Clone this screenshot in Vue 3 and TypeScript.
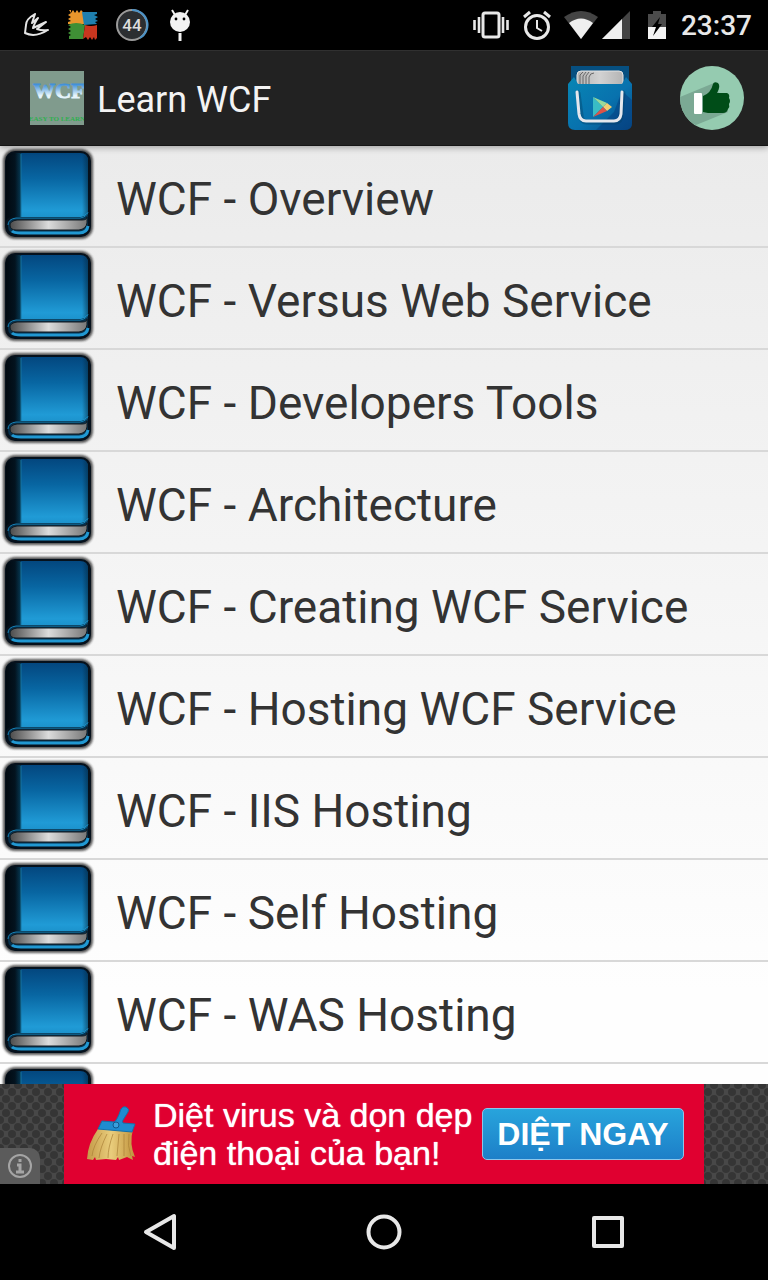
<script setup lang="ts">
interface Topic {
  id: number
  title: string
}

const topics: Topic[] = [
  'WCF - Overview',
  'WCF - Versus Web Service',
  'WCF - Developers Tools',
  'WCF - Architecture',
  'WCF - Creating WCF Service',
  'WCF - Hosting WCF Service',
  'WCF - IIS Hosting',
  'WCF - Self Hosting',
  'WCF - WAS Hosting',
  '',
].map((title, id) => ({ id, title }))
</script>

<template>
  <div class="screen">
    <svg class="defs" width="0" height="0" aria-hidden="true">
      <defs>
        <linearGradient id="cover" x1="0" y1="0" x2="0" y2="1">
          <stop offset="0" stop-color="#03477f" />
          <stop offset="0.4" stop-color="#0866a2" />
          <stop offset="0.9" stop-color="#209bd6" />
          <stop offset="1" stop-color="#1c93cd" />
        </linearGradient>
        <linearGradient id="spine" x1="0" y1="0" x2="1" y2="0">
          <stop offset="0" stop-color="#010910" />
          <stop offset="0.6" stop-color="#03131f" />
          <stop offset="1" stop-color="#063a55" />
        </linearGradient>
        <linearGradient id="edge" x1="0" y1="0" x2="1" y2="0">
          <stop offset="0" stop-color="#04283f" stop-opacity="0" />
          <stop offset="1" stop-color="#04283f" stop-opacity="0.55" />
        </linearGradient>
        <linearGradient id="pages" x1="0" y1="0" x2="1" y2="0">
          <stop offset="0" stop-color="#4c4c4c" />
          <stop offset="0.5" stop-color="#dcdcdc" />
          <stop offset="1" stop-color="#777" />
        </linearGradient>
        <filter id="soft" x="-10%" y="-10%" width="120%" height="120%">
          <feGaussianBlur stdDeviation="1.3" />
        </filter>
        <symbol id="book" viewBox="0 0 96 96">
          <rect x="3" y="3" width="90" height="90" rx="12" fill="#222" opacity="0.75" filter="url(#soft)" />
          <rect x="5" y="5" width="86" height="86" rx="10" fill="#06111c" />
          <path d="M21 7H80Q88 7 88 15V64Q88 70 81 71H21Z" fill="url(#cover)" />
          <path d="M82 8Q88 8 88 15V64Q88 68 82 70Z" fill="url(#edge)" />
          <path d="M6 15Q6 7 14 7H21V71H12Q8 71 6 75Z" fill="url(#spine)" />
          <path d="M21 8V71" stroke="#17759f" stroke-width="1" />
          <path d="M88 66Q87 71 80 72H16Q8 73 8 80Q8 88 17 88H80Q88 88 88 80V70" fill="#07314d" />
          <path d="M88 66Q87 71 80 72H16Q8 73 8 79" fill="none" stroke="#1583b8" stroke-width="1" />
          <path d="M17 74H82Q87 74 87 71V77Q86 83 79 84H16Q10 84 10 79Q10 75 17 74Z" fill="url(#pages)" stroke="#101b22" stroke-width="1" />
          <path d="M12 85Q14 87 21 87H79Q87 87 88 80" fill="none" stroke="#2198d2" stroke-width="3" />
        </symbol>
      </defs>
    </svg>

    <header class="status" aria-label="Status bar">
      <div class="status-group left">
        <svg width="28" height="26" viewBox="0 0 28 26">
          <path d="M12 2Q3 7 3 13L2 21Q12 26 25 18Q19 19 14 17L23 10L10 16Q11 12 15 6L9 11Z" fill="none" stroke="#e4e4e4" stroke-width="2" stroke-linejoin="round" />
        </svg>
        <svg width="32" height="32" viewBox="0 0 32 32">
          <path d="M2 1H4V4L6 1L8 4L10 1L12 4L14 1L17 4L18 15L1 15V13L4 12L1 10L4 8L1 6L4 4Z" fill="#e8962c" />
          <path d="M15 3H30V5L27 6L31 8L28 10L31 12L28 13L30 15L17 16Z" fill="#1f7fae" />
          <path d="M1 16Q9 12 18 16L16 30H2V27L4 26L1 24L4 22L1 20L4 18Z" fill="#3f8f35" />
          <path d="M18 16Q24 18 30 16V29L28 31L27 28L25 31L23 28L21 31L19 28L16 30Z" fill="#c8361f" />
        </svg>
        <svg width="34" height="34" viewBox="0 0 34 34">
          <circle cx="17" cy="17" r="15" fill="#2b2e31" stroke="#9b9b9b" stroke-width="2" />
          <path d="M17 2A15 15 0 0 1 25 30" fill="none" stroke="#4c92c6" stroke-width="2" />
          <text x="17" y="23" text-anchor="middle" class="count">44</text>
        </svg>
        <svg class="android" width="22" height="34" viewBox="0 0 22 34">
          <circle cx="11" cy="14" r="10" fill="#f2f2f2" />
          <path d="M6 7L3 2M16 7L19 2" stroke="#f2f2f2" stroke-width="2" />
          <path d="M11 25V33" stroke="#f2f2f2" stroke-width="3" />
          <circle cx="7" cy="11" r="1.4" fill="#000" />
          <circle cx="15" cy="11" r="1.4" fill="#000" />
        </svg>
      </div>
      <div class="status-group right">
        <svg width="36" height="28" viewBox="0 0 36 28">
          <rect x="10" y="2" width="16" height="24" rx="2" fill="none" stroke="#e8e8e8" stroke-width="3" />
          <path d="M1.5 9V19M6 6V22M30 6V22M34.5 9V19" stroke="#e8e8e8" stroke-width="2.6" />
        </svg>
        <svg class="alarm" width="28" height="30" viewBox="0 0 28 30">
          <circle cx="14" cy="17" r="11.5" fill="none" stroke="#e8e8e8" stroke-width="3" />
          <path d="M14 10V18L19 21" fill="none" stroke="#e8e8e8" stroke-width="2" />
          <path d="M1 7L7 2M27 7L21 2" stroke="#e8e8e8" stroke-width="3" />
        </svg>
        <svg width="36" height="30" viewBox="0 0 36 30">
          <path d="M1 7Q18 -5 35 7L18 29Z" fill="#444" />
          <path d="M6 13Q18 4 30 13L18 29Z" fill="#efefef" />
        </svg>
        <svg class="signal" width="30" height="30" viewBox="0 0 30 30">
          <path d="M1 29L29 1V29Z" fill="#444" />
          <path d="M1 29L21 9V29Z" fill="#efefef" />
        </svg>
        <svg class="battery" width="20" height="30" viewBox="0 0 20 30">
          <path d="M1 4H6V1H14V4H19V17H1Z" fill="#4b4b4b" />
          <path d="M1 17H19V29H1Z" fill="#f4f4f4" />
          <path d="M13 7L5 17H9L6 26L15 14H11Z" fill="#000" />
        </svg>
        <time class="clock">23:37</time>
      </div>
    </header>

    <nav class="app-bar">
      <svg width="54" height="54" viewBox="0 0 54 54" role="img" aria-label="WCF">
        <defs>
          <linearGradient id="word" x1="0" y1="0" x2="0" y2="1">
            <stop offset="0.25" stop-color="#3f8fd8" />
            <stop offset="0.7" stop-color="#e6f5fb" />
          </linearGradient>
        </defs>
        <rect width="54" height="54" fill="#809b8d" />
        <text x="29" y="27" text-anchor="middle" class="logo-word">WCF</text>
        <text x="27" y="50" text-anchor="middle" class="logo-tag">EASY TO LEARN</text>
      </svg>
      <h1>Learn WCF</h1>
      <button class="action" aria-label="More apps">
        <svg width="64" height="64" viewBox="0 0 64 64">
          <defs>
            <linearGradient id="bag" x1="0" y1="0" x2="1" y2="1">
              <stop offset="0" stop-color="#0786b4" />
              <stop offset="0.55" stop-color="#0872ae" />
              <stop offset="1" stop-color="#064985" />
            </linearGradient>
            <linearGradient id="cards" x1="0" y1="0" x2="1" y2="0">
              <stop offset="0" stop-color="#b4b4b4" />
              <stop offset="0.5" stop-color="#d2d2d2" />
              <stop offset="1" stop-color="#b4b4b4" />
            </linearGradient>
          </defs>
          <path d="M3 0H61V18H3Z" fill="#064f80" />
          <rect x="9" y="5" width="46" height="20" rx="4" fill="url(#cards)" stroke="#e4e4e4" />
          <path d="M12 18V9L15 6M15 18V10L18 6M18 18V10L21 6M21 18V11Q22 7 26 7" fill="none" stroke="#686868" />
          <path d="M0 18L6 11L10 18H54L58 11L64 18V57Q64 64 57 64H7Q0 64 0 57Z" fill="url(#bag)" />
          <path d="M28 64L46 46L54 25L64 34V57Q64 64 57 64Z" fill="#063f82" opacity="0.55" />
          <path d="M10 27L13 49Q13 56 19 56H47Q53 56 53 49L55 27" fill="none" stroke="#063e65" stroke-width="5" stroke-linecap="round" opacity="0.4" />
          <path d="M9 26L11 48Q12 55 18 55H46Q52 55 53 48L54 26" fill="none" stroke="#e5e7ed" stroke-width="3" stroke-linecap="round" />
          <path d="M25 31V51L35 41Z" fill="#39bcc5" />
          <path d="M25 31L39 37L35 41Z" fill="#98d99b" />
          <path d="M39 37L44 41L39 45L35 41Z" fill="#f1ce72" />
          <path d="M25 51L35 41L39 45Z" fill="#dc5348" />
        </svg>
      </button>
      <button class="action" aria-label="Like">
        <svg width="64" height="64" viewBox="0 0 64 64">
          <defs><clipPath id="disc"><circle cx="32" cy="32" r="32" /></clipPath></defs>
          <circle cx="32" cy="32" r="32" fill="#95cbb0" />
          <path d="M0 31L34 17L48 46L16 59L0 54Z" fill="#7ba994" clip-path="url(#disc)" />
          <rect x="14" y="27" width="8" height="21" rx="1" fill="#fff" />
          <path d="M23 30Q31 27 33 18Q34 15 38 17Q41 20 37 27H47Q50 28 49 32Q51 35 49 38Q50 41 48 43Q47 47 43 47H28L23 46Z" fill="#004d18" />
        </svg>
      </button>
    </nav>

    <main class="list-wrap">
      <ul class="topics">
        <li v-for="topic in topics" :key="topic.id">
          <a href="#">
            <svg width="96" height="96" aria-hidden="true"><use href="#book" /></svg>
            <span>{{ topic.title }}</span>
          </a>
        </li>
      </ul>
    </main>

    <aside class="ad">
      <svg class="mesh" width="100%" height="100%" aria-hidden="true">
        <defs>
          <pattern id="dots" width="12" height="14" patternUnits="userSpaceOnUse">
            <rect width="12" height="14" fill="#484848" />
            <circle cx="6" cy="1" r="4" fill="#353535" />
            <circle cx="6" cy="15" r="4" fill="#353535" />
            <circle cx="0" cy="8" r="4" fill="#353535" />
            <circle cx="12" cy="8" r="4" fill="#353535" />
          </pattern>
        </defs>
        <rect width="100%" height="100%" fill="url(#dots)" />
      </svg>
      <div class="banner">
        <svg width="52" height="56" viewBox="0 0 52 56" aria-hidden="true">
          <defs>
            <linearGradient id="straw" x1="0" y1="0" x2="1" y2="0">
              <stop offset="0" stop-color="#c59a48" />
              <stop offset="0.5" stop-color="#e9cd7c" />
              <stop offset="1" stop-color="#c0923c" />
            </linearGradient>
          </defs>
          <path d="M12 23H47Q43 38 49 51L46 50L47 54L41 51L33 54L32 51L30 54L20 53L10 54L9 51L7 54L1 53Q2 37 12 23Z" fill="url(#straw)" />
          <path d="M16 27Q7 40 6 50M21 28Q14 42 13 52M27 28Q22 42 22 52M33 28L31 50M38 28L38 50M43 28Q41 40 45 50" fill="none" stroke="#ab8238" opacity="0.7" />
          <path d="M28 16Q31 15 35 3Q37 0 40 1Q44 3 42 6L37 14Q36 16 37 17L49 18L46 26L12 23L16 15Z" fill="#1e8cd0" stroke="#1470aa" />
          <circle cx="30" cy="19" r="3" fill="#3aa0dd" stroke="#12598c" />
        </svg>
        <p>
          <span>Diệt virus và dọn dẹp</span>
          <span>điện thoại của bạn!</span>
        </p>
        <button class="cta">DIỆT NGAY</button>
      </div>
      <button class="info" aria-label="Ad information">
        <svg width="26" height="26" viewBox="0 0 26 26">
          <circle cx="13" cy="13" r="11" fill="none" stroke="#a5a5a5" stroke-width="2" />
          <path d="M13 6V9M10 12H13V19M9 19H17" fill="none" stroke="#a5a5a5" stroke-width="3" />
        </svg>
      </button>
    </aside>

    <footer class="nav">
      <button aria-label="Back">
        <svg width="40" height="40" viewBox="0 0 40 40"><path d="M34 4V36L6 20Z" /></svg>
      </button>
      <button aria-label="Home">
        <svg width="40" height="40" viewBox="0 0 40 40"><circle cx="20" cy="20" r="15.5" /></svg>
      </button>
      <button aria-label="Recent apps">
        <svg width="40" height="40" viewBox="0 0 40 40"><rect x="6" y="6" width="28" height="28" /></svg>
      </button>
    </footer>
  </div>
</template>

<style>
body {
  margin: 0;
  background: #000;
}
</style>

<style scoped>
.screen {
  display: flex;
  flex-direction: column;
  height: 100vh;
  font-family: Roboto, "Noto Sans", sans-serif;
  background: #000;
}

.defs {
  position: absolute;
}

button {
  border: 0;
  padding: 0;
  background: none;
  font: inherit;
  color: inherit;
  cursor: pointer;
}

svg {
  display: block;
  flex: none;
}

.status {
  display: flex;
  align-items: center;
  justify-content: space-between;
  flex: none;
  height: 50px;
  padding: 0 16px 0 23px;
  color: #e8e8e8;
}

.status-group {
  display: flex;
  align-items: center;
}

.left {
  gap: 16px;
}

.android {
  margin-left: 4px;
}

.right {
  gap: 12px;
}

.alarm {
  margin: 0 0 0 2px;
}

.signal {
  margin-left: -10px;
}

.battery {
  margin: 0 2px 0 4px;
}

.count {
  font: 500 17px Roboto, sans-serif;
  fill: #ddd;
}

.clock {
  font-size: 28px;
  font-weight: 500;
  line-height: 32px;
  padding-top: 2px;
}

.app-bar {
  position: relative;
  z-index: 1;
  display: flex;
  align-items: center;
  flex: none;
  box-sizing: border-box;
  height: 96px;
  padding: 0 24px 0 30px;
  background: #222;
  border-top: 1px solid #303030;
  border-bottom: 1px solid #151515;
  box-shadow: 0 2px 6px rgba(0, 0, 0, 0.3);
}

.logo-word {
  font: 700 22px "Liberation Serif", serif;
  fill: url(#word);
  stroke: url(#word);
}

.logo-tag {
  font: 700 7px "Liberation Serif", serif;
  fill: #2fb04f;
}

h1 {
  flex: 1;
  margin: 0 0 0 13px;
  padding-top: 4px;
  color: #f3f3f3;
  font-size: 36px;
  font-weight: 400;
  line-height: 44px;
}

.action + .action {
  margin-left: 48px;
}

.list-wrap {
  flex: 1;
  min-height: 0;
  overflow: auto;
  scrollbar-width: none;
  background: linear-gradient(#ebebeb, #fefefe 90%);
}

.topics {
  margin: 0;
  padding: 0;
  list-style: none;
}

.topics li {
  border-bottom: 2px solid #d8d8d8;
}

.topics a {
  display: flex;
  gap: 20px;
  height: 100px;
  color: #333;
  font-size: 46px;
  line-height: 106px;
  text-decoration: none;
  white-space: nowrap;
}

.ad {
  position: relative;
  display: flex;
  justify-content: center;
  flex: none;
  height: 100px;
}

.mesh {
  position: absolute;
  inset: 0;
}

.banner {
  position: relative;
  display: flex;
  align-items: center;
  box-sizing: border-box;
  width: 640px;
  padding: 0 20px 0 22px;
  background: #e00030;
  color: #fff;
  font-family: "Liberation Sans", Arial, sans-serif;
}

.banner p {
  flex: 1;
  margin: 0 0 0 15px;
  font-size: 34px;
  line-height: 38px;
  white-space: nowrap;
  text-shadow: 0 0 1px #fff;
}

.banner p span {
  display: block;
}

.cta {
  box-sizing: border-box;
  flex: none;
  width: 202px;
  height: 52px;
  border: 1px solid #8cc6ea;
  border-radius: 5px;
  background: linear-gradient(#28a4dc, #1d7fc8);
  font-size: 32px;
  font-weight: 700;
}

.info {
  position: absolute;
  left: 0;
  bottom: 0;
  display: grid;
  place-items: center;
  width: 40px;
  height: 36px;
  border-radius: 0 10px 0 0;
  background: #5b5b5b;
}

.nav {
  display: flex;
  align-items: center;
  justify-content: center;
  gap: 184px;
  flex: none;
  height: 96px;
}

.nav svg {
  fill: none;
  stroke: #e8e8e8;
  stroke-width: 4;
  stroke-linejoin: round;
}
</style>
